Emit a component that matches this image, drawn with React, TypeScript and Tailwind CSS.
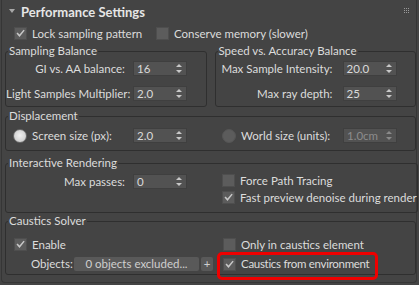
import React from "react";

const Check = () => (
  <svg width="13" height="13" viewBox="0 0 13 13" className="block">
    <path d="M3 6.5 L5.3 9.2 L10.2 3.2" stroke="#c8c8c8" strokeWidth="1.8" fill="none" strokeLinecap="square" />
  </svg>
);

const CheckBox = ({ checked }: { checked?: boolean }) => (
  <div className="w-[13px] h-[13px] bg-[#5c5c5c] border border-[#4e4e4e] shrink-0 flex items-center justify-center">
    {checked ? <Check /> : null}
  </div>
);

const Radio = ({ on }: { on?: boolean }) => (
  <div
    className={
      "w-[14px] h-[14px] rounded-full shrink-0 " +
      (on ? "bg-[radial-gradient(circle_at_50%_45%,#f0f0f0,#c4c4c4)] border border-[#6a6a6a]" : "bg-[#5c5c5c] border border-[#555]")
    }
  />
);

const Arrows = ({ dim }: { dim?: boolean }) => (
  <svg width="6" height="9" viewBox="0 0 6 9" className="block">
    <path d="M3 0 L6 3 L0 3 Z" fill={dim ? "#8a8a8a" : "#c8c8c8"} />
    <path d="M0 6 L6 6 L3 9 Z" fill={dim ? "#8a8a8a" : "#c8c8c8"} />
  </svg>
);

const Spinner = ({ value, dim }: { value: string; dim?: boolean }) => (
  <div className="w-[54px] h-[15px] bg-[#525252] border border-[#3f3f3f] flex items-center pl-[3px] pr-[4px] shrink-0">
    <span className={"flex-1 leading-[13px] " + (dim ? "text-[#8c8c8c]" : "text-[#dadada]")}>{value}</span>
    <Arrows dim={dim} />
  </div>
);

const Group = ({
  title,
  className,
  children,
}: {
  title: string;
  className?: string;
  children: React.ReactNode;
}) => (
  <fieldset className={"border border-[#2f2f2f] rounded-[3px] " + (className ?? "")}>
    <legend className="ml-[2px] px-[1px] leading-[14px] text-[#dcdcdc]">{title}</legend>
    {children}
  </fieldset>
);

export default function App() {
  return (
    <div
      className="w-[419px] h-[285px] bg-[#444444] overflow-hidden text-[11.5px] text-[#dcdcdc] whitespace-nowrap"
      style={{ fontFamily: 'Lato, "Liberation Sans", sans-serif' }}
    >
      <div className="relative ml-[1px] mr-[2px] h-[283px] border border-t-0 border-[#363636] rounded-b-[4px]">
        {/* header */}
        <div className="h-[24px] flex items-center pl-[7px] pr-[7px]">
          <svg width="6" height="4" viewBox="0 0 6 4" className="block mt-[-2px]">
            <path d="M0 0 L6 0 L3 4 Z" fill="#a8a8a8" />
          </svg>
          <span className="ml-[6px] font-bold text-[13px] text-[#e6e6e6] leading-[16px]">Performance Settings</span>
          <div className="flex-1" />
          <div className="grid grid-cols-3 gap-[1px] mt-[-4px]">
            {Array.from({ length: 9 }).map((_, i) => (
              <div key={i} className="w-[1px] h-[1px] bg-[#9a9a9a]" />
            ))}
          </div>
        </div>

        {/* top checkboxes */}
        <div className="h-[19px] flex items-center pl-[12px]">
          <CheckBox checked />
          <span className="ml-[5px] w-[124px]">Lock sampling pattern</span>
          <CheckBox />
          <span className="ml-[5px]">Conserve memory (slower)</span>
        </div>

        {/* sampling + speed */}
        <div className="flex pl-[3px] gap-[8px] mt-[1px]">
          <Group title="Sampling Balance" className="w-[202px] h-[63px]">
            <div className="flex flex-col gap-[8px] mt-[2px]">
              <div className="flex items-center">
                <span className="w-[119px] text-right">GI vs. AA balance:</span>
                <div className="ml-[8px]"><Spinner value="16" /></div>
              </div>
              <div className="flex items-center">
                <span className="w-[119px] text-right">Light Samples Multiplier:</span>
                <div className="ml-[8px]"><Spinner value="2.0" /></div>
              </div>
            </div>
          </Group>
          <Group title="Speed vs. Accuracy Balance" className="w-[202px] h-[63px]">
            <div className="flex flex-col gap-[8px] mt-[2px]">
              <div className="flex items-center">
                <span className="w-[117px] text-right">Max Sample Intensity:</span>
                <div className="ml-[10px]"><Spinner value="20.0" /></div>
              </div>
              <div className="flex items-center">
                <span className="w-[117px] text-right">Max ray depth:</span>
                <div className="ml-[10px]"><Spinner value="25" /></div>
              </div>
            </div>
          </Group>
        </div>

        {/* displacement */}
        <div className="pl-[3px] mt-[2px]">
          <Group title="Displacement" className="w-[411px] h-[42px]">
            <div className="flex items-center mt-[4px] pl-[7px]">
              <Radio on />
              <span className="ml-[5px] w-[101px]">Screen size (px):</span>
              <Spinner value="2.0" />
              <div className="w-[35px]" />
              <Radio />
              <span className="ml-[5px] w-[102px]">World size (units):</span>
              <Spinner value="1.0cm" dim />
            </div>
          </Group>
        </div>

        {/* interactive rendering */}
        <div className="pl-[3px] mt-[5px]">
          <Group title="Interactive Rendering" className="w-[411px] h-[57px]">
            <div className="flex">
              <div className="flex items-center mt-[3px] self-start">
                <span className="w-[119px] text-right">Max passes:</span>
                <div className="ml-[8px]"><Spinner value="0" /></div>
              </div>
              <div className="flex flex-col ml-[35px] mt-[4px] gap-[4px]">
                <div className="flex items-center h-[13px]">
                  <CheckBox />
                  <span className="ml-[5px]">Force Path Tracing</span>
                </div>
                <div className="flex items-center h-[13px]">
                  <CheckBox checked />
                  <span className="ml-[5px]">Fast preview denoise during render</span>
                </div>
              </div>
            </div>
          </Group>
        </div>

        {/* caustics */}
        <div className="pl-[3px] mt-[1px]">
          <Group title="Caustics Solver" className="w-[411px] h-[61px]">
            <div className="flex">
              <div className="flex flex-col pl-[8px] mt-[10px] gap-[6px]">
                <div className="flex items-center h-[13px]">
                  <CheckBox checked />
                  <span className="ml-[5px]">Enable</span>
                </div>
                <div className="flex items-center h-[14px] pl-[17px]">
                  <span className="w-[43px]">Objects:</span>
                  <div className="w-[125px] h-[14px] bg-[#595959] rounded-[2px] flex items-center justify-center text-[#cfcfcf] leading-[14px]">
                    0 objects excluded...
                  </div>
                  <div className="ml-[2px] w-[12px] h-[14px] bg-[#595959] rounded-[2px] flex items-center justify-center text-[#cfcfcf] leading-[14px]">
                    +
                  </div>
                </div>
              </div>
              <div className="flex flex-col ml-[10px] mt-[10px] gap-[6px]">
                <div className="flex items-center h-[13px]">
                  <CheckBox />
                  <span className="ml-[5px]">Only in caustics element</span>
                </div>
                <div className="flex items-center h-[14px]">
                  <CheckBox checked />
                  <span className="ml-[5px] tracking-[-0.3px]">Caustics from environment</span>
                </div>
              </div>
            </div>
          </Group>
        </div>

        {/* red highlight annotation */}
        <div className="absolute left-[215px] top-[252px] w-[161px] h-[28px] border-[3px] border-[#ee0000] rounded-[5px]" />
      </div>
    </div>
  );
}
